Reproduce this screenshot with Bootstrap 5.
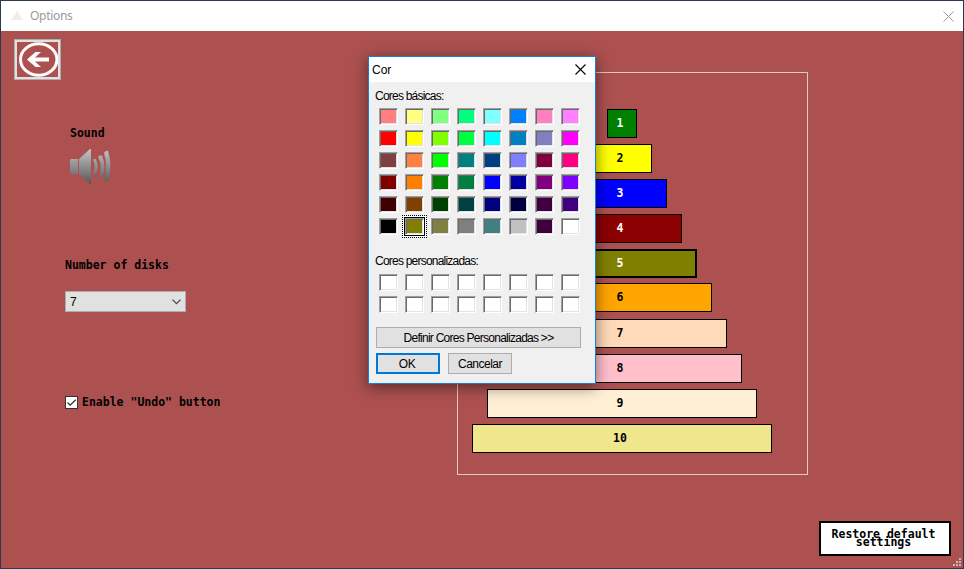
<!DOCTYPE html>
<html lang="en">
<head>
<meta charset="utf-8">
<meta name="viewport" content="width=device-width, initial-scale=1">
<title>Options</title>
<link href="https://cdn.jsdelivr.net/npm/bootstrap@5.3.0/dist/css/bootstrap.min.css" rel="stylesheet">
<style>
body{height:569px;overflow:hidden;font-family:"Liberation Sans",sans-serif;font-size:12px;line-height:16px;color:#000;background:#2c3a4f}
.win{height:569px;border:1px solid #2c3a4f;background:#ac5150}
.win-title{height:30px;padding:0 9px 0 10px;color:#999;font:12px/30px "Noto Sans",sans-serif;letter-spacing:-.3px}
.win-title span{margin-left:7px}
.pix{font:bold 11.5px/12px "DejaVu Sans Mono",monospace}
.left-pane{width:456px;padding:8px 0 0 13px}
.back-btn{width:47px;height:41px;padding:0;border:1px solid #adadad;border-radius:0;background:#e1e1e1}
.fields{padding-left:51px}
.sound-label{margin:47px 0 0 5px}
.sound-icon{margin:9px 0 0 4px}
.disks-label{margin-top:73px;white-space:nowrap}
.disks-select{width:121px;height:21px;margin-top:20px;padding:0 4px;border:1px solid #adadad;background:#e1e1e1}
.undo{margin-top:84px}
.undo .pix{margin-top:-2px}
.tick{width:13px;height:13px;border:1px solid #333;background:#fff}
.tower{width:351px;height:403px;margin-top:41px;padding:36px 22px 0 0;border:1px solid #e2c9c9;gap:6px}
.disk{height:29px;flex:none;border:1px solid #000;padding:0 3px 2px 0}
.w1{width:30px}.w2{width:60px}.w3{width:90px}.w4{width:120px}.w5{width:150px}
.w6{width:180px}.w7{width:210px}.w8{width:240px}.w9{width:270px}.w10{width:300px}
.restore{width:132px;height:35px;margin:46px 12px 0 0;padding:0 3px 2px 0;border:2px solid #000;border-radius:0;background:#fff;color:#000;line-height:8px}
.grip{right:2px;bottom:2px}
.dlg{left:368px;top:56px;width:228px;height:328px;border:1px solid #1a7fd4;background:#f0f0f0;box-shadow:0 3px 14px rgba(0,0,0,.5)}
.dlg-title{height:25px;padding:0 9px 0 3px;background:#fff}
.dlg-body{padding:0 0 0 7px}
.lbl{height:16px;margin-left:-1px;letter-spacing:-.78px}
.basic-lbl{margin-top:6px;margin-bottom:4px}
.custom-lbl{margin-top:18px;margin-bottom:5px}
.sw-grid{display:grid;grid-template-columns:repeat(8,19px);grid-auto-rows:17px;gap:5px 7px;margin-left:3px}
.sw{border:1px solid;border-color:#a0a0a0 #fff #fff #a0a0a0;box-shadow:inset 1px 1px #696969,inset -1px -1px #e3e3e3}
.sw.picked{box-shadow:inset 1px 1px #696969,inset -1px -1px #e3e3e3,0 0 0 1px #000,0 0 0 2px #fff;outline:1px dotted #000;outline-offset:2px}
.sysbtn{height:21px;border:1px solid #adadad;border-radius:0;background:#e1e1e1;padding:0;font-size:12px;line-height:19px;color:#000;letter-spacing:-.5px}
.define{width:205px;margin-top:14px;padding-top:1px;letter-spacing:-.74px}
.actions{margin-top:5px}
.small-btn{width:64px;padding-top:1px}
.ok-btn{border:2px solid #0078d7;line-height:17px;padding-right:2px}
</style>
</head>
<body>
<div class="win position-relative d-flex flex-column">
  <header class="win-title bg-white d-flex align-items-center">
    <svg width="12" height="10" viewBox="0 0 12 10"><path d="M6 0 12 9H0Z" fill="#f2eded"/></svg>
    <span class="flex-grow-1">Options</span>
    <svg width="11" height="11" viewBox="0 0 11 11"><path d="m.5.5 10 10m0-10-10 10" stroke="#999"/></svg>
  </header>
  <main class="d-flex">
    <section class="left-pane">
      <button class="back-btn btn d-flex align-items-center justify-content-center" aria-label="Back">
        <svg width="41" height="35" viewBox="0 0 41 35"><path fill="#ac5150" d="M0 0h41v35H0z"/><ellipse cx="21.7" cy="17.5" rx="18.2" ry="15.8" fill="none" stroke="#fff" stroke-width="3"/><path d="M10 17.500 18.500 10H24L18 15.500H32V19.500H18L24 25H18.500Z" fill="#fff"/></svg>
      </button>
      <div class="fields">
        <div class="pix sound-label">Sound</div>
        <svg class="sound-icon d-block" width="42" height="38" viewBox="0 0 42 38">
          <defs><linearGradient id="metal" gradientUnits="userSpaceOnUse" x1="0" y1="1" x2="0" y2="37"><stop stop-color="#c4c4c4"/><stop offset="1" stop-color="#555"/></linearGradient></defs>
          <g fill="url(#metal)"><path d="M2 11H9V26H2Q1 26 1 25V12Q1 11 2 11ZM10 11 21 1H22V36H21L10 26Z"/><path d="M24 11.500Q26 10 27 11.500 31 19 27 25.500Q26 27 24 25Q27 19 24 11.500ZM29 9Q31 6.500 33 7.500 38 19 33 29.500Q31 31 30 28.500 34 19 29 9ZM35 5Q37 2 39 3 44 18 39 33.500Q37 34 35 31 39 18 35 5Z"/></g>
        </svg>
        <div class="pix disks-label">Number of disks</div>
        <div class="disks-select d-flex align-items-center justify-content-between"><span>7</span>
          <svg width="9" height="6" viewBox="0 0 9 6"><path d="m.5.7 4 4 4-4" fill="none" stroke="#444" stroke-width="1.2"/></svg>
        </div>
        <div class="undo d-flex align-items-center">
          <span class="tick d-flex"><svg width="11" height="11" viewBox="0 0 11 11"><path d="m1.500 5.500 2.700 2.700 5.500-5.500" fill="none" stroke="#333" stroke-width="1.300"/></svg></span>
          <span class="pix ms-1">Enable "Undo" button</span>
        </div>
      </div>
    </section>
    <section class="tower pix d-flex flex-column align-items-center" id="tower"></section>
  </main>
  <button class="restore btn pix align-self-end">Restore default<br>settings</button>
  <svg class="grip position-absolute" width="8" height="8" viewBox="0 0 8 8"><path d="M6 0h2v2H6zM3 3h2v2H3zM6 3h2v2H6zM0 6h2v2H0zM3 6h2v2H3zM6 6h2v2H6z" fill="#c9b9b9"/></svg>
</div>

<div class="dlg position-absolute" role="dialog">
  <div class="dlg-title d-flex align-items-center justify-content-between"><span>Cor</span>
    <svg width="11" height="11" viewBox="0 0 11 11"><path d="m.5.5 10 10m0-10-10 10" stroke="#000" stroke-width="1.100"/></svg>
  </div>
  <div class="dlg-body">
    <div class="lbl basic-lbl">Cores básicas:</div>
    <div class="sw-grid" id="basic"></div>
    <div class="lbl custom-lbl">Cores personalizadas:</div>
    <div class="sw-grid" id="custom"></div>
    <button class="sysbtn btn define d-block">Definir Cores Personalizadas &gt;&gt;</button>
    <div class="d-flex gap-2 actions"><button class="sysbtn btn small-btn ok-btn">OK</button><button class="sysbtn btn small-btn">Cancelar</button></div>
  </div>
</div>
<script>
const disks = [["#008000","#fff"],["#ff0","#000"],["#00f","#fff"],["#8b0000","#fff"],["#808000","#fff"],["#ffa500","#000"],["#ffdab9","#000"],["#ffc0cb","#000"],["#ffefd5","#000"],["#f0e68c","#000"]];
disks.forEach(([bg, fg], i) => {
  const d = document.createElement("div");
  d.className = `disk w${i + 1} d-flex align-items-center justify-content-center`;
  d.style.background = bg;
  d.style.color = fg;
  if (i === 4) d.style.borderWidth = "2px";
  if (i === 5) { d.style.marginTop = "-1px"; d.style.marginBottom = "1px"; }
  d.textContent = i + 1;
  document.getElementById("tower").append(d);
});
const basic = ("ff8080 ffff80 80ff80 00ff80 80ffff 0080ff ff80c0 ff80ff ff0000 ffff00 80ff00 00ff40 00ffff 0080c0 8080c0 ff00ff " +
  "804040 ff8040 00ff00 008080 004080 8080ff 800040 ff0080 800000 ff8000 008000 008040 0000ff 0000a0 800080 8000ff " +
  "400000 804000 004000 004040 000080 000040 400040 400080 000000 808000 808040 808080 408080 c0c0c0 400040 ffffff").split(" ");
function fill(id, colors, picked) {
  colors.forEach((c, i) => {
    const s = document.createElement("span");
    s.className = "sw" + (i === picked ? " picked" : "");
    s.style.backgroundColor = "#" + c;
    document.getElementById(id).append(s);
  });
}
fill("basic", basic, 41);
fill("custom", Array(16).fill("ffffff"), -1);
</script>
<script src="https://cdn.jsdelivr.net/npm/bootstrap@5.3.0/dist/js/bootstrap.bundle.min.js"></script>
</body>
</html>
